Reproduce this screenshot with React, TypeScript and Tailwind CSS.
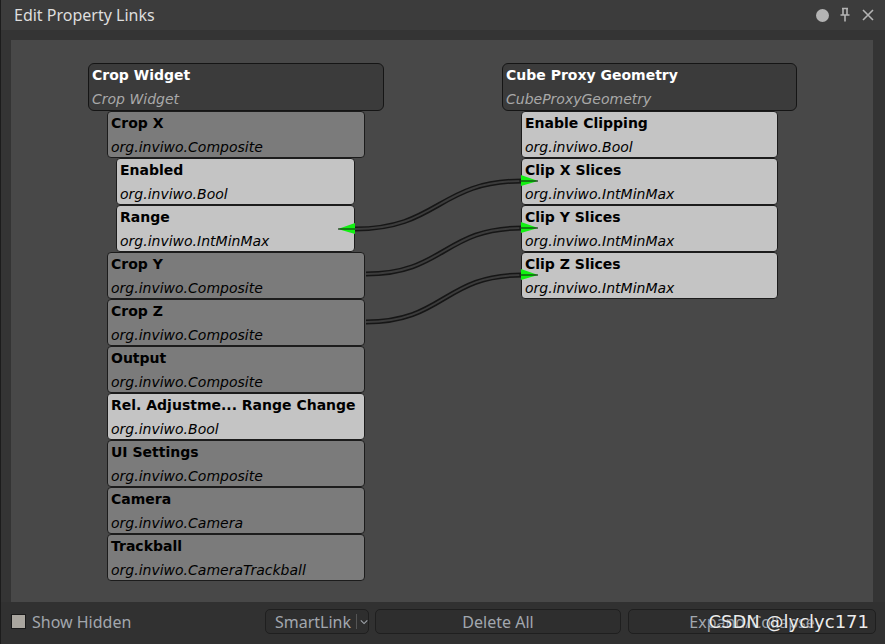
import React from "react";

type Prop = { title: string; type: string; tone: "mid" | "light"; indent?: boolean };

const leftProps: Prop[] = [
  { title: "Crop X", type: "org.inviwo.Composite", tone: "mid" },
  { title: "Enabled", type: "org.inviwo.Bool", tone: "light", indent: true },
  { title: "Range", type: "org.inviwo.IntMinMax", tone: "light", indent: true },
  { title: "Crop Y", type: "org.inviwo.Composite", tone: "mid" },
  { title: "Crop Z", type: "org.inviwo.Composite", tone: "mid" },
  { title: "Output", type: "org.inviwo.Composite", tone: "mid" },
  { title: "Rel. Adjustme... Range Change", type: "org.inviwo.Bool", tone: "light" },
  { title: "UI Settings", type: "org.inviwo.Composite", tone: "mid" },
  { title: "Camera", type: "org.inviwo.Camera", tone: "mid" },
  { title: "Trackball", type: "org.inviwo.CameraTrackball", tone: "mid" },
];

const rightProps: Prop[] = [
  { title: "Enable Clipping", type: "org.inviwo.Bool", tone: "light" },
  { title: "Clip X Slices", type: "org.inviwo.IntMinMax", tone: "light" },
  { title: "Clip Y Slices", type: "org.inviwo.IntMinMax", tone: "light" },
  { title: "Clip Z Slices", type: "org.inviwo.IntMinMax", tone: "light" },
];

const nodeFont = { fontFamily: '"DejaVu Sans", sans-serif' };

function NodeHeader({ title, sub }: { title: string; sub: string }) {
  return (
    <div className="h-[48px] rounded-[6px] border border-[#151515] bg-[#3b3b3b] pl-[3px] text-[14px] leading-[23px]">
      <div className="font-bold text-white">{title}</div>
      <div className="pt-px italic text-[#a9a9a9]">{sub}</div>
    </div>
  );
}

function PropRow({ p, width }: { p: Prop; width: number }) {
  return (
    <div
      className={
        "h-[47px] rounded-[4px] border border-[#1c1c1c] pl-[3px] text-[14px] leading-[23px] text-black " +
        (p.tone === "light" ? "bg-[#c4c4c4]" : "bg-[#7b7b7b]") +
        (p.indent ? " ml-[28px]" : " ml-[19px]")
      }
      style={{ width }}
    >
      <div className="font-bold">{p.title}</div>
      <div className="pt-px italic">{p.type}</div>
    </div>
  );
}

function Link({ x1, y1, x2, y2 }: { x1: number; y1: number; x2: number; y2: number }) {
  const mx = (x1 + x2) / 2;
  const d = `M ${x1} ${y1} C ${mx} ${y1}, ${mx} ${y2}, ${x2} ${y2}`;
  return (
    <g>
      <path d={d} fill="none" stroke="#161616" strokeWidth={5} />
      <path d={d} fill="none" stroke="#3c3c3c" strokeWidth={2} />
    </g>
  );
}

function PortRight({ x, y }: { x: number; y: number }) {
  return (
    <g>
      <polygon points={`${x},${y - 6} ${x + 17},${y} ${x},${y + 5}`} fill="#12f012" />
      <line x1={x - 2} y1={y} x2={x + 17} y2={y} stroke="#111" strokeWidth={1} />
    </g>
  );
}

function PortLeft({ x, y }: { x: number; y: number }) {
  return (
    <g>
      <polygon points={`${x},${y - 6} ${x - 17},${y} ${x},${y + 5}`} fill="#12f012" />
      <line x1={x} y1={y} x2={x - 17} y2={y} stroke="#111" strokeWidth={1} />
    </g>
  );
}

export default function App() {
  return (
    <div
      className="flex h-[644px] w-[885px] flex-col overflow-hidden border-l border-[#1c1c1c] bg-[#313131]"
      style={{ fontFamily: '"Noto Sans", "Open Sans", sans-serif' }}
    >
      {/* title bar */}
      <div className="flex h-[30px] shrink-0 items-center bg-[#3c3c3c] pl-[13px] pr-[10px]">
        <span className="text-[16px] text-[#dedede]">Edit Property Links</span>
        <div className="ml-auto flex items-center gap-[10px] text-[#b4b4b4]">
          <div className="h-[13px] w-[13px] rounded-full bg-[#b4b4b4]" />
          <svg width="12" height="16" viewBox="0 0 12 16" fill="none" stroke="#b4b4b4" strokeWidth="1.6">
            <path d="M3 1.5h6M4 1.5v6M8 1.5v6M1.5 8h9M6 8v6.5" />
          </svg>
          <svg width="14" height="14" viewBox="0 0 14 14" stroke="#b4b4b4" strokeWidth="1.6">
            <path d="M2 2l10 10M12 2L2 12" />
          </svg>
        </div>
      </div>

      {/* canvas */}
      <div className="flex-1 bg-[#343434] pb-0 pl-[10px] pr-[12px] pt-[10px]">
        <div className="relative h-[562px] w-full bg-[#484848]" style={nodeFont}>
          {/* left processor */}
          <div className="absolute left-[77px] top-[23px] w-[296px]">
            <NodeHeader title="Crop Widget" sub="Crop Widget" />
            {leftProps.map((p) => (
              <PropRow key={p.title} p={p} width={p.indent ? 239 : 258} />
            ))}
          </div>

          {/* right processor */}
          <div className="absolute left-[491px] top-[23px] w-[295px]">
            <NodeHeader title="Cube Proxy Geometry" sub="CubeProxyGeometry" />
            {rightProps.map((p) => (
              <PropRow key={p.title} p={p} width={257} />
            ))}
          </div>

          <svg className="pointer-events-none absolute inset-0" width="862" height="562">
            <Link x1={344} y1={189} x2={511} y2={141} />
            <Link x1={355} y1={234} x2={511} y2={188} />
            <Link x1={355} y1={282} x2={511} y2={235} />
            <PortLeft x={344} y={189} />
            <PortRight x={510} y={141} />
            <PortRight x={510} y={188} />
            <PortRight x={510} y={235} />
          </svg>
        </div>
      </div>

      {/* bottom bar */}
      <div className="relative flex h-[42px] shrink-0 items-center whitespace-nowrap pb-[3px] pl-[10px] pr-[9px] text-[16px] text-[#a2a7ae]">
        <div className="h-[15px] w-[15px] shrink-0 border border-[#1a1a1a] bg-[#aaa69f]" />
        <span className="ml-[6px] w-[98px] shrink-0">Show Hidden</span>
        <div className="ml-[135px] flex h-[25px] w-[104px] shrink-0 items-center rounded-[5px] border border-[#1f1f1f] bg-[#2e2e2e] pl-[9px]">
          <span>SmartLink</span>
          <span className="ml-[5px] h-[15px] w-px bg-[#555]" />
          <svg className="ml-[3px]" width="10" height="8" viewBox="0 0 10 8" fill="none" stroke="#a2a7ae" strokeWidth="1.3">
            <path d="M1 2l4 4 4-4" />
          </svg>
        </div>
        <div className="ml-[6px] flex h-[25px] w-[246px] shrink-0 items-center justify-center rounded-[5px] border border-[#1f1f1f] bg-[#2e2e2e]">
          Delete All
        </div>
        <div className="ml-[7px] flex h-[25px] w-[248px] shrink-0 items-center justify-center rounded-[5px] border border-[#1f1f1f] bg-[#2e2e2e]">
          Expand/Collapse
        </div>
        <span
          className="absolute right-[16px] top-[6px] text-[18px] text-[#ececec]"
          style={{ fontFamily: '"DejaVu Sans", sans-serif', textShadow: "0 0 2px #222" }}
        >
          CSDN @lyclyc171
        </span>
      </div>
    </div>
  );
}
